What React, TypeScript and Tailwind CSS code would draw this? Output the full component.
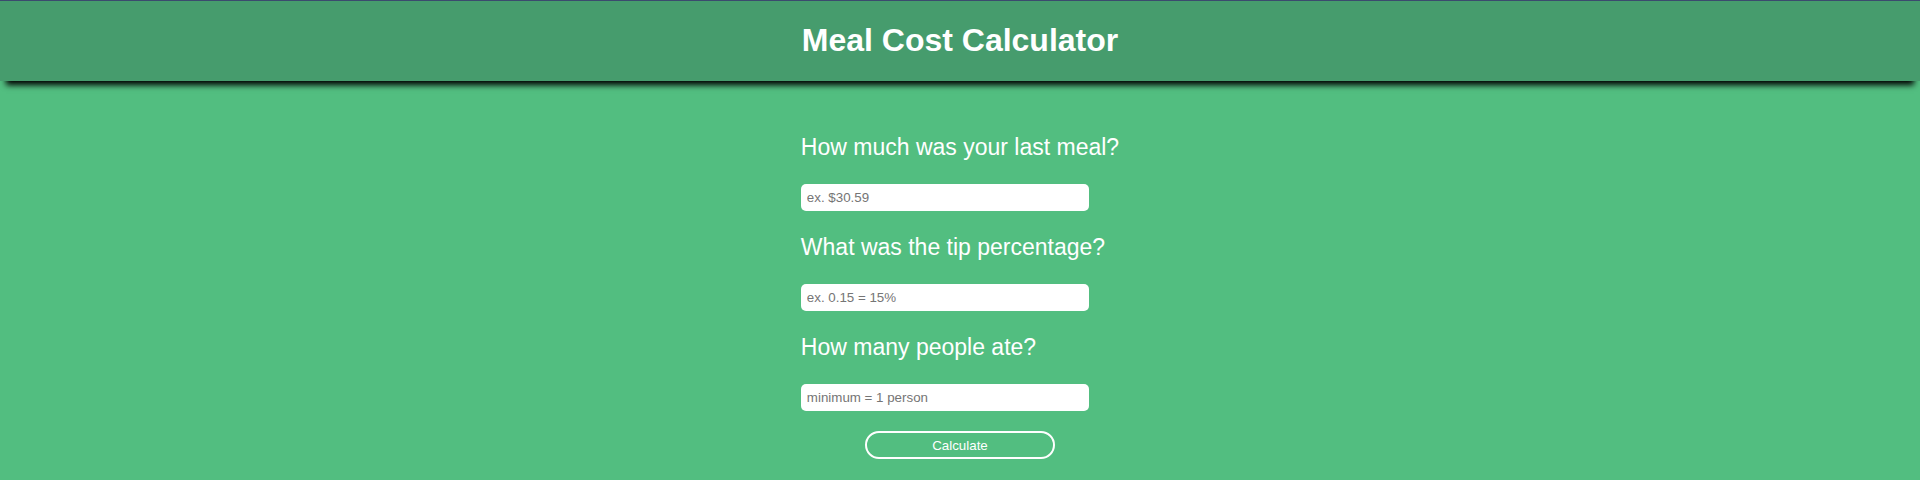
import React from "react";

const questions = [
  { label: "How much was your last meal?", placeholder: "ex. $30.59" },
  { label: "What was the tip percentage?", placeholder: "ex. 0.15 = 15%" },
  { label: "How many people ate?", placeholder: "minimum = 1 person" },
];

export default function App() {
  return (
    <div
      className="min-h-[480px] w-full bg-[#52be80]"
      style={{ fontFamily: '"Liberation Sans", Arial, sans-serif' }}
    >
      <header className="relative z-10 flex h-[81px] items-center justify-center border-t border-[#3b4a6e] bg-[#469c6d] pb-[1px] shadow-[0_10px_6px_-6px_#000]">
        <h1 className="text-[32px] font-bold leading-[37px] text-white">
          Meal Cost Calculator
        </h1>
      </header>
      <main className="flex justify-center pt-[53px]">
        <div className="flex w-fit flex-col">
          {questions.map((q, i) => (
            <div key={q.label} className={i === 0 ? "flex flex-col" : "flex flex-col pt-[1px]"}>
              <p className="text-[23px] leading-[26px] text-white">{q.label}</p>
              <input
                type="text"
                placeholder={q.placeholder}
                className="mt-[24px] mb-[22px] h-[27px] w-[288px] rounded-[5px] bg-white px-[6px] text-[13.33px] text-black outline-none placeholder:text-[#757575]"
              />
            </div>
          ))}
          <div className="-mt-[2px] flex justify-center">
            <button className="h-[28px] w-[190px] rounded-full border-2 border-white bg-transparent pt-[1px] text-[13.33px] text-white">
              Calculate
            </button>
          </div>
        </div>
      </main>
    </div>
  );
}
